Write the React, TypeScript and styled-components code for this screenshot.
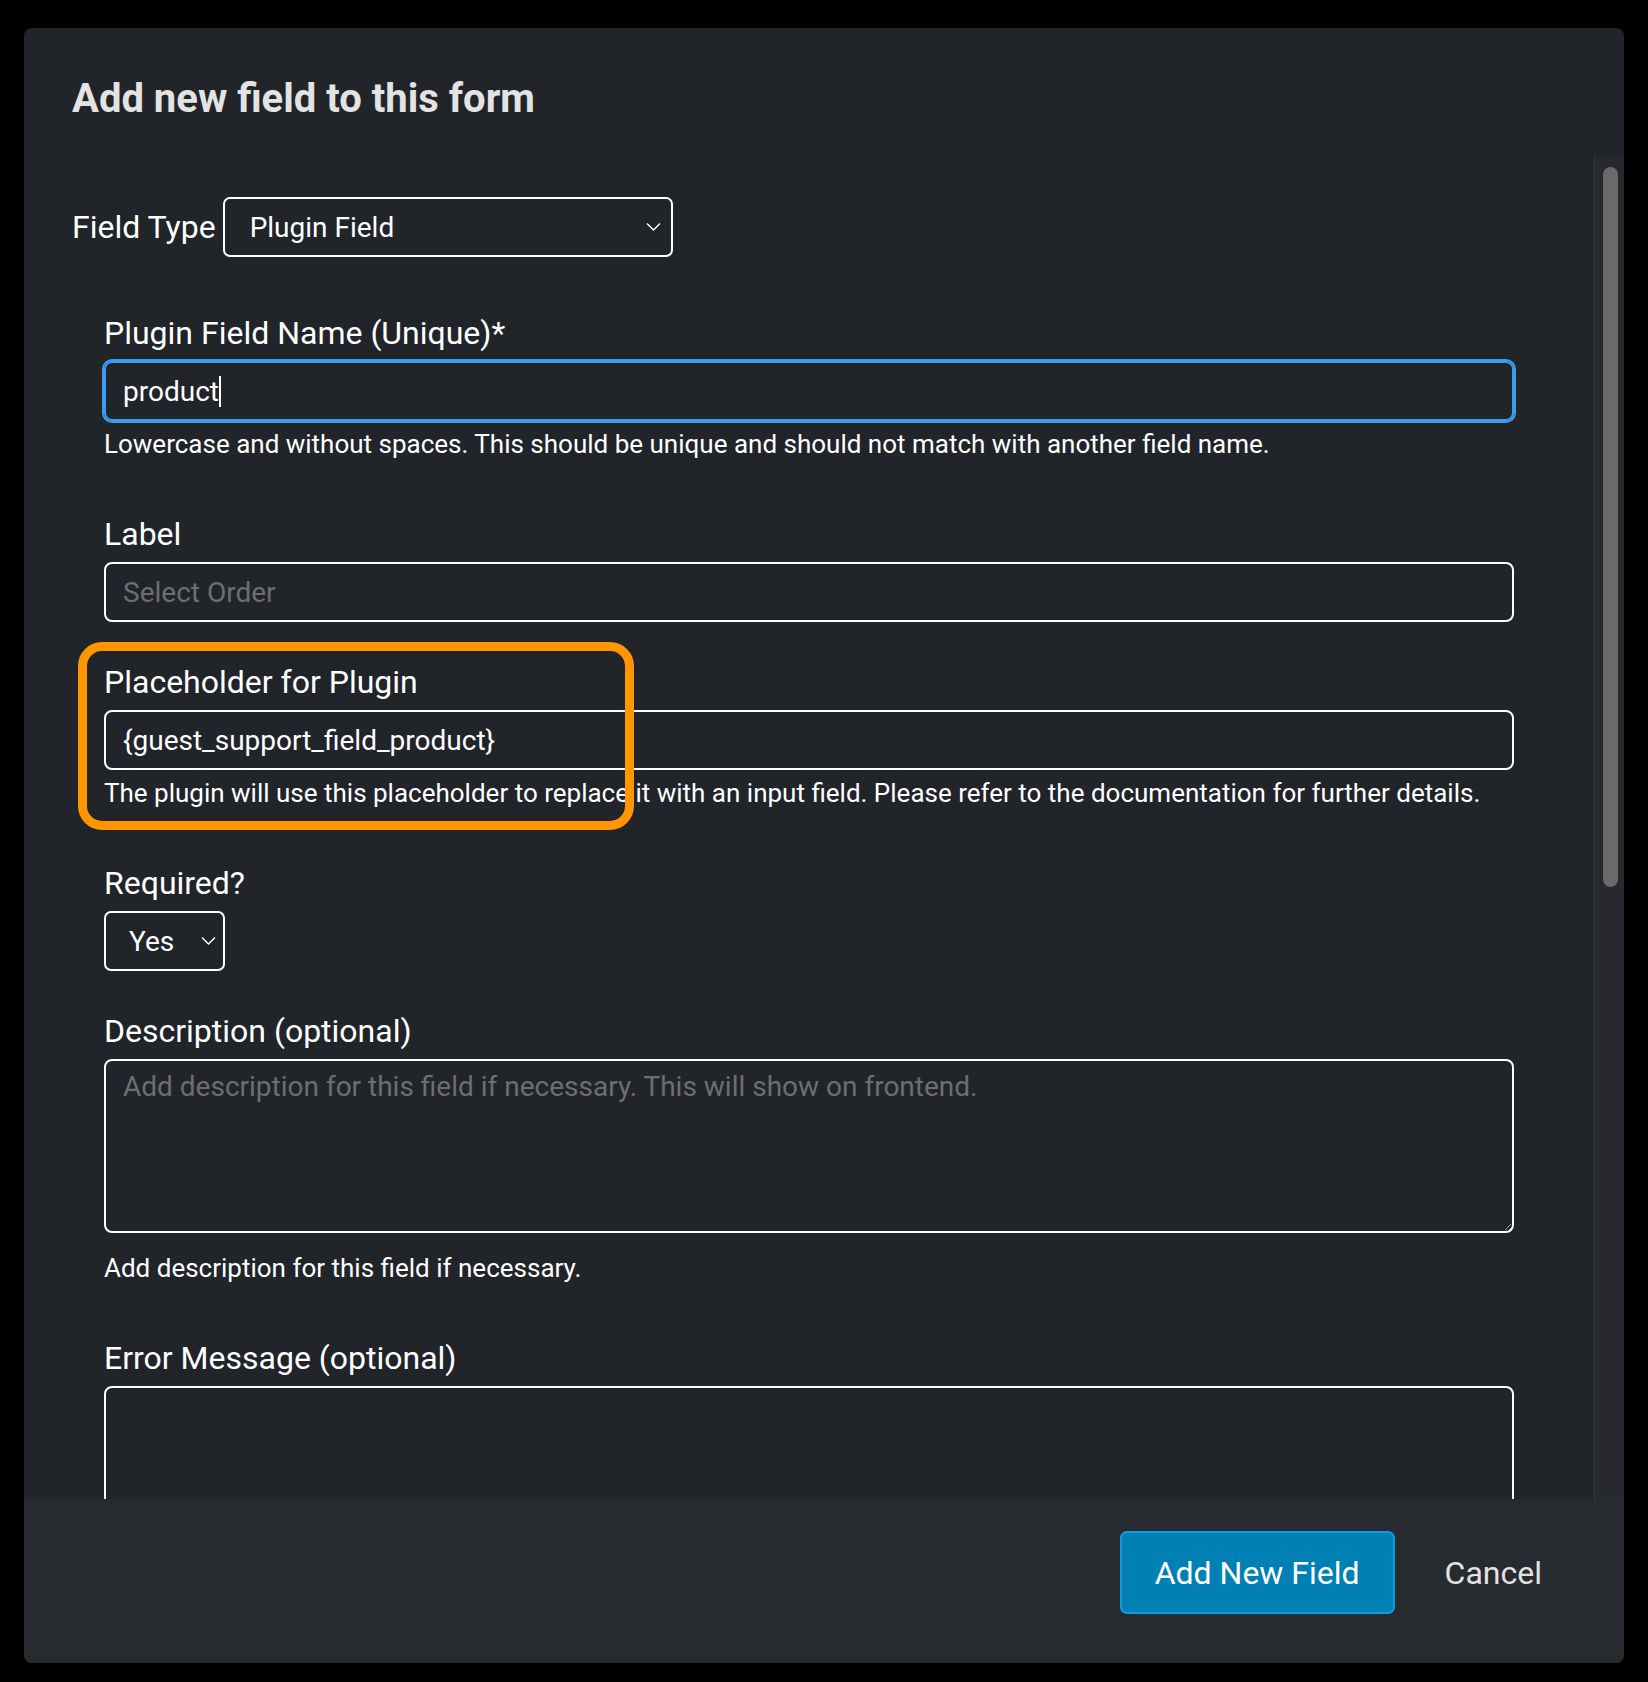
import React from 'react';
import styled, { createGlobalStyle } from 'styled-components';

const GlobalStyle = createGlobalStyle`
  html, body {
    margin: 0;
    padding: 0;
    background: #000;
    font-family: Roboto, "Liberation Sans", Arial, sans-serif;
  }
  * { box-sizing: border-box; }
`;

const Page = styled.div`
  height: 1682px;
  padding: 28px 24px 19px 24px;
`;

const Modal = styled.div`
  height: 100%;
  background: #212429;
  border-radius: 8px;
  display: flex;
  flex-direction: column;
  overflow: hidden;
`;

const Header = styled.div`
  height: 129px;
  flex-shrink: 0;
  padding: 47px 48px 0 48px;
`;

const Title = styled.h2`
  margin: 0;
  font-size: 40px;
  line-height: 1.2;
  font-weight: 700;
  color: #e3e3e3;
`;

const BodyWrap = styled.div`
  flex: 1;
  min-height: 0;
  display: flex;
`;

const Content = styled.div`
  flex: 1;
  overflow: hidden;
  padding: 40px 48px 0 48px;
`;

// drawn scrollbar of the modal body
const ScrollTrack = styled.div`
  width: 30px;
  flex-shrink: 0;
  background: #27292e;
  border-left: 1px solid #35383d;
  padding: 10px 6px 0 8px;
`;

const ScrollThumb = styled.div`
  height: 720px;
  background: #6a6a6a;
  border-radius: 8px;
`;

const TypeRow = styled.div`
  display: flex;
  align-items: center;
  gap: 7px;
`;

const RowLabel = styled.span`
  font-size: 32px;
  line-height: 1.5;
  color: #fff;
`;

const Fields = styled.div`
  margin-top: 52px;
  padding: 0 32px;
`;

const FieldGroup = styled.div`
  position: relative;
  display: flex;
  flex-direction: column;
  align-items: flex-start;
  margin-bottom: 36px;
`;

const Label = styled.label`
  display: block;
  font-size: 32px;
  line-height: 1.5;
  color: #fff;
  margin-bottom: 4px;
`;

const Input = styled.div<{ $focused?: boolean; $placeholder?: boolean }>`
  height: 60px;
  width: 100%;
  display: flex;
  align-items: center;
  padding: 0 17px;
  border: 2px solid ${p => (p.$focused ? '#3d9cf2' : '#fff')};
  box-shadow: ${p => (p.$focused ? '0 0 0 2px #3d9cf2' : 'none')};
  border-radius: 8px;
  font-size: 28px;
  color: ${p => (p.$placeholder ? '#6e6e6e' : '#fff')};
  white-space: pre;
`;

const Caret = styled.span`
  display: inline-block;
  width: 2px;
  height: 31px;
  background: #fff;
`;

const Help = styled.div<{ $gap?: number }>`
  font-size: 26px;
  line-height: 1.5;
  color: #fff;
  margin-top: ${p => p.$gap ?? 4}px;
  margin-bottom: 10px;
`;

const SelectBox = styled.div<{ $width: number; $pad: number; $chevronRight: number }>`
  position: relative;
  width: ${p => p.$width}px;
  height: 60px;
  display: flex;
  align-items: center;
  padding-left: ${p => p.$pad}px;
  border: 2px solid #fff;
  border-radius: 7px;
  font-size: 28px;
  color: #fff;

  svg {
    position: absolute;
    right: ${p => p.$chevronRight}px;
    top: 50%;
    transform: translateY(-50%);
  }
`;

const TextArea = styled.textarea`
  display: block;
  width: 100%;
  height: 174px;
  padding: 5px 17px;
  border: 2px solid #fff;
  border-radius: 8px;
  background: transparent;
  color: #fff;
  font-family: Roboto, "Liberation Sans", Arial, sans-serif;
  font-size: 28px;
  line-height: 1.5;
  outline: none;

  &::placeholder {
    color: #6e6e6e;
  }
`;

const Highlight = styled.div`
  position: absolute;
  left: -26px;
  top: -16px;
  width: 556px;
  height: 188px;
  border: 9px solid #ff9500;
  border-radius: 24px;
  pointer-events: none;
`;

const Footer = styled.div`
  height: 164px;
  flex-shrink: 0;
  background: #272a2f;
  display: flex;
  justify-content: flex-end;
  align-items: flex-start;
  gap: 50px;
  padding: 32px 82px 0 0;
`;

const PrimaryButton = styled.button`
  height: 83px;
  padding: 0 33px;
  background: #0180b3;
  border: 2px solid #0b9de3;
  border-radius: 7px;
  color: #fff;
  font-family: Roboto, "Liberation Sans", Arial, sans-serif;
  font-size: 32px;
`;

const TextButton = styled.button`
  height: 83px;
  padding: 0;
  background: none;
  border: none;
  color: #e2e2e2;
  font-family: Roboto, "Liberation Sans", Arial, sans-serif;
  font-size: 32px;
`;

function Chevron() {
  return (
    <svg width="15" height="9" viewBox="0 0 15 9" fill="none">
      <path d="M1 1l6.5 6.5L14 1" stroke="#fff" strokeWidth="1.4" />
    </svg>
  );
}

export default function App() {
  return (
    <>
      <GlobalStyle />
      <Page>
        <Modal>
          <Header>
            <Title>Add new field to this form</Title>
          </Header>
          <BodyWrap>
            <Content>
              <TypeRow>
                <RowLabel>Field Type</RowLabel>
                <SelectBox $width={450} $pad={25} $chevronRight={10}>
                  Plugin Field
                  <Chevron />
                </SelectBox>
              </TypeRow>

              <Fields>
                <FieldGroup>
                  <Label>Plugin Field Name (Unique)*</Label>
                  <Input $focused>
                    product
                    <Caret />
                  </Input>
                  <Help>
                    Lowercase and without spaces. This should be unique and should not match with another field name.
                  </Help>
                </FieldGroup>

                <FieldGroup>
                  <Label>Label</Label>
                  <Input $placeholder>Select Order</Input>
                </FieldGroup>

                <FieldGroup>
                  <Label>Placeholder for Plugin</Label>
                  <Input>{'{guest_support_field_product}'}</Input>
                  <Help>
                    The plugin will use this placeholder to replace it with an input field. Please refer to the documentation for further details.
                  </Help>
                  <Highlight />
                </FieldGroup>

                <FieldGroup>
                  <Label>Required?</Label>
                  <SelectBox $width={121} $pad={23} $chevronRight={7}>
                    Yes
                    <Chevron />
                  </SelectBox>
                </FieldGroup>

                <FieldGroup>
                  <Label>Description (optional)</Label>
                  <TextArea placeholder="Add description for this field if necessary. This will show on frontend." />
                  <Help $gap={16}>Add description for this field if necessary.</Help>
                </FieldGroup>

                <FieldGroup>
                  <Label>Error Message (optional)</Label>
                  <TextArea />
                </FieldGroup>
              </Fields>
            </Content>
            <ScrollTrack>
              <ScrollThumb />
            </ScrollTrack>
          </BodyWrap>
          <Footer>
            <PrimaryButton>Add New Field</PrimaryButton>
            <TextButton>Cancel</TextButton>
          </Footer>
        </Modal>
      </Page>
    </>
  );
}
